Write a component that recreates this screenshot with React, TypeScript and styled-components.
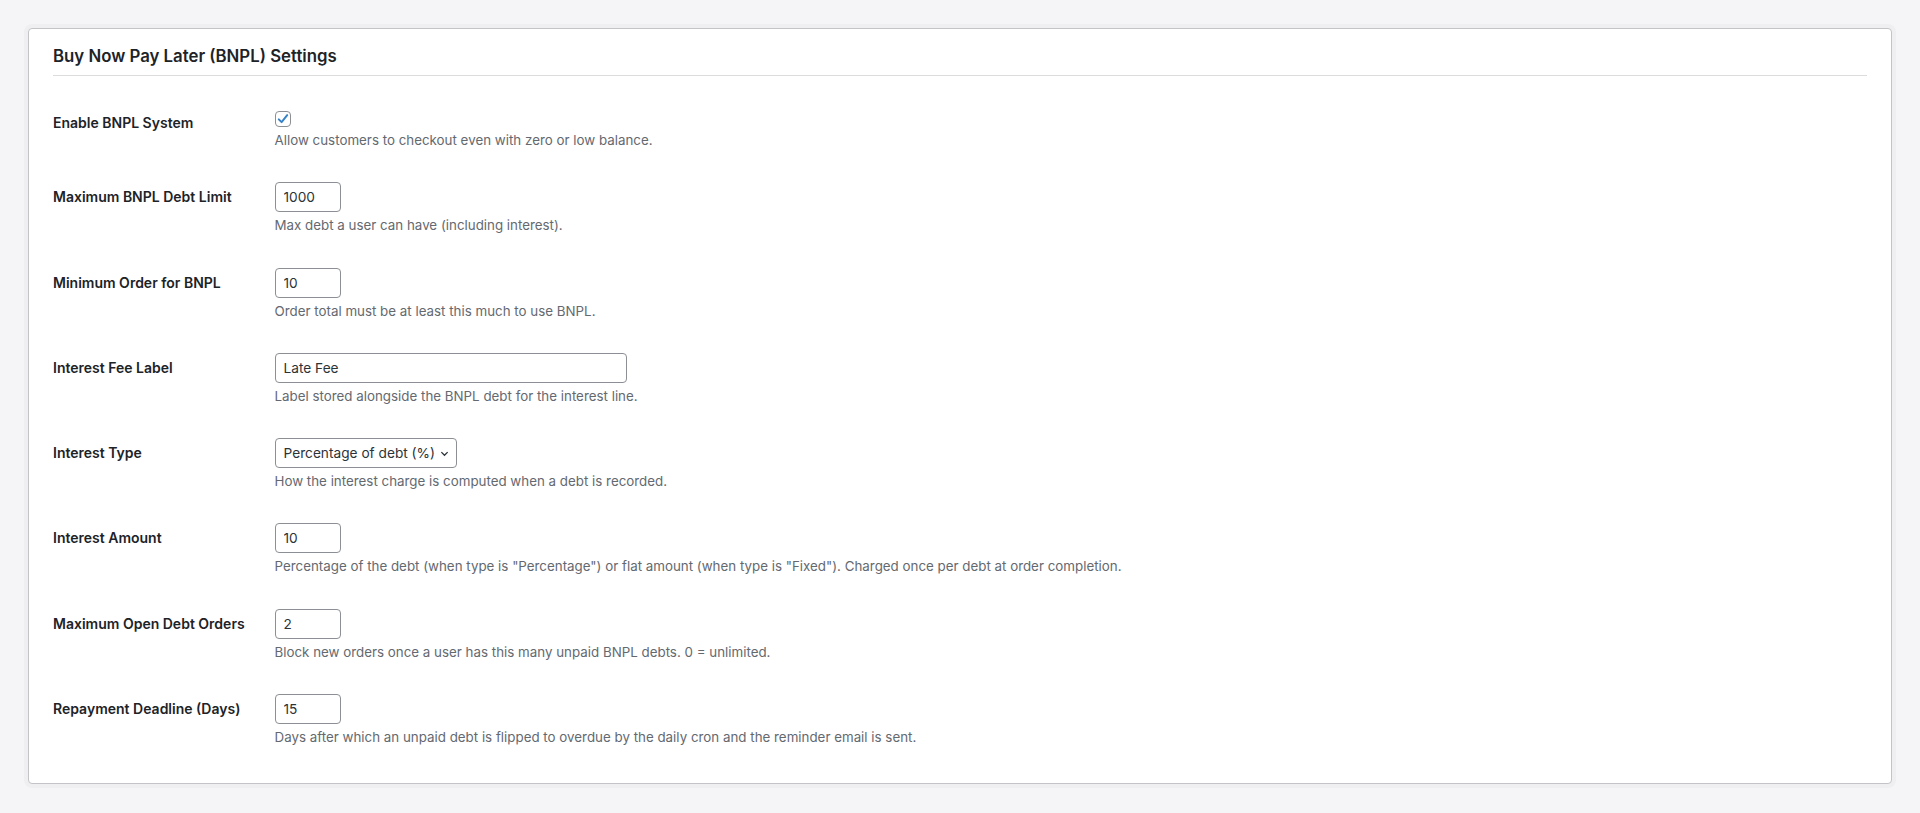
import React from "react";
import styled, { createGlobalStyle } from "styled-components";

const FONT = `Inter, "Noto Sans", sans-serif`;

const GlobalStyle = createGlobalStyle`
  html, body { margin: 0; padding: 0; }
  body { background: #f5f5f7; font-family: ${FONT}; color: #3c434a; }
`;

const Page = styled.div`
  padding: 28px 28px 29px;
`;

const Card = styled.section`
  background: #fff;
  border: 1px solid #c3c4c7;
  border-radius: 4px;
  box-shadow: 0 0 0 4px #efeff1, 0 1px 1px rgba(0, 0, 0, 0.04);
  padding: 0 24px 18px;
`;

const Header = styled.div`
  padding: 15px 0 6px;
  border-bottom: 1px solid #dcdcde;
`;

const Title = styled.h2`
  margin: 0;
  font-size: 16.8px;
  line-height: 25px;
  font-weight: 600;
  color: #1d2327;
`;

const Rows = styled.div`
  margin-top: 18px;
  display: flex;
  flex-direction: column;
`;

const Row = styled.div`
  display: grid;
  grid-template-columns: 221.5px 1fr;
`;

const Label = styled.label`
  padding-top: 20px;
  font-size: 14px;
  line-height: 18px;
  font-weight: 600;
  color: #1d2327;
`;

const Field = styled.div`
  padding: 14px 0 17.8px;
  display: flex;
  flex-direction: column;
  align-items: flex-start;
`;

const Description = styled.p`
  margin: 4px 0 0;
  font-size: 13.35px;
  line-height: 19.5px;
  color: #646970;
`;

const TextInput = styled.input<{ $w: number }>`
  box-sizing: border-box;
  width: ${(p) => p.$w}px;
  height: 30px;
  margin: 0;
  padding: 0 8px;
  border: 1px solid #8c8f94;
  border-radius: 4px;
  background: #fff;
  font-family: ${FONT};
  font-size: 13.7px;
  color: #2c3338;
  outline: none;
`;

const CheckBox = styled.span`
  box-sizing: border-box;
  margin-top: 3px;
  width: 16px;
  height: 16px;
  border: 1px solid #8c8f94;
  border-radius: 4px;
  background: #fff;
  display: flex;
  align-items: center;
  justify-content: center;
`;

const SelectBox = styled.div`
  box-sizing: border-box;
  height: 30px;
  display: inline-flex;
  align-items: center;
  gap: 5px;
  padding: 0 7px 0 8px;
  border: 1px solid #8c8f94;
  border-radius: 4px;
  background: #fff;
  font-size: 13.7px;
  color: #2c3338;
`;

const Check = () => (
  <CheckBox>
    <svg width="14" height="14" viewBox="0 0 20 20">
      <path d="M4 10.5 L8 14.5 L16 4.5" fill="none" stroke="#3582c4" strokeWidth="2.8" strokeLinecap="round" strokeLinejoin="round" />
    </svg>
  </CheckBox>
);

const Chevron = () => (
  <svg width="9" height="9" viewBox="0 0 10 10">
    <path d="M1.5 3.5 L5 7 L8.5 3.5" fill="none" stroke="#2c3338" strokeWidth="1.4" />
  </svg>
);

type Setting = { label: string; desc: string; kind: "check" | "text" | "select"; value?: string; width?: number };

const settings: Setting[] = [
  { label: "Enable BNPL System", desc: "Allow customers to checkout even with zero or low balance.", kind: "check" },
  { label: "Maximum BNPL Debt Limit", desc: "Max debt a user can have (including interest).", kind: "text", value: "1000", width: 66 },
  { label: "Minimum Order for BNPL", desc: "Order total must be at least this much to use BNPL.", kind: "text", value: "10", width: 66 },
  { label: "Interest Fee Label", desc: "Label stored alongside the BNPL debt for the interest line.", kind: "text", value: "Late Fee", width: 352 },
  { label: "Interest Type", desc: "How the interest charge is computed when a debt is recorded.", kind: "select", value: "Percentage of debt (%)" },
  { label: "Interest Amount", desc: 'Percentage of the debt (when type is "Percentage") or flat amount (when type is "Fixed"). Charged once per debt at order completion.', kind: "text", value: "10", width: 66 },
  { label: "Maximum Open Debt Orders", desc: "Block new orders once a user has this many unpaid BNPL debts. 0 = unlimited.", kind: "text", value: "2", width: 66 },
  { label: "Repayment Deadline (Days)", desc: "Days after which an unpaid debt is flipped to overdue by the daily cron and the reminder email is sent.", kind: "text", value: "15", width: 66 },
];

export default function App() {
  return (
    <>
      <GlobalStyle />
      <Page>
        <Card>
          <Header>
            <Title>Buy Now Pay Later (BNPL) Settings</Title>
          </Header>
          <Rows>
            {settings.map((s) => (
              <Row key={s.label}>
                <Label>{s.label}</Label>
                <Field>
                  {s.kind === "check" && <Check />}
                  {s.kind === "text" && <TextInput $w={s.width!} defaultValue={s.value} />}
                  {s.kind === "select" && (
                    <SelectBox>
                      <span>{s.value}</span>
                      <Chevron />
                    </SelectBox>
                  )}
                  <Description>{s.desc}</Description>
                </Field>
              </Row>
            ))}
          </Rows>
        </Card>
      </Page>
    </>
  );
}
